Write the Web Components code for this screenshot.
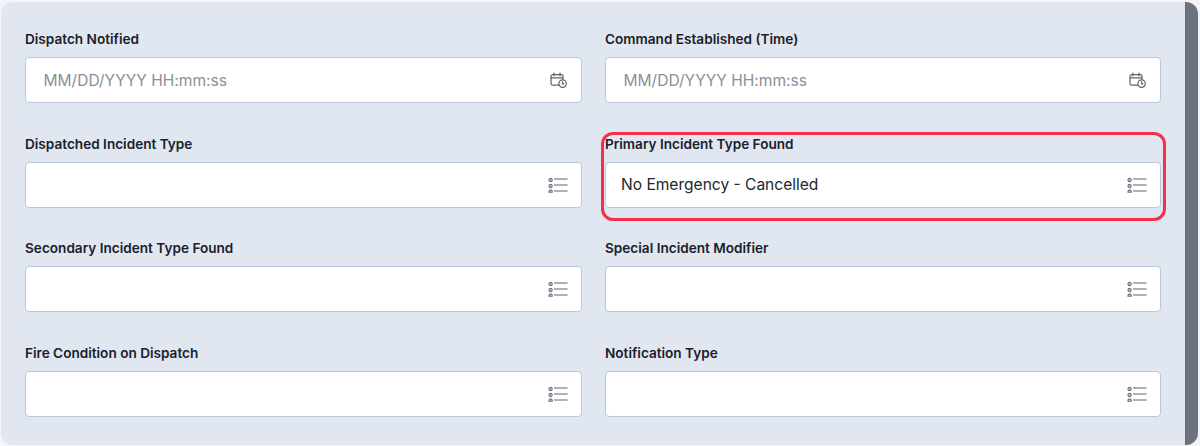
<!DOCTYPE html>
<html><head><meta charset="utf-8"><style>
html,body{margin:0;padding:0;height:446px;overflow:hidden;background:#f3f3f8}
</style></head><body>
<template id="field-t"><style>
:host{display:flex;flex-direction:column;gap:10px;font-family:Inter,"Liberation Sans",sans-serif;min-width:0}
.l{font-size:13.6px;font-weight:600;line-height:16px;color:#1a202c;height:16px;white-space:nowrap}
.b{box-sizing:border-box;height:46px;background:#fff;border:1px solid #b9c6dc;border-radius:4px;display:flex;align-items:center;padding:0 13px 0 var(--pad,15px)}
.v{flex:1;font-size:15.55px;color:#22262e;white-space:nowrap}
:host([placeholder]) .v{color:#8b8f96}
svg{display:block;flex:none}
</style><div class="l"></div><div class="b"><div class="v"></div><span id="i"></span></div></template>
<script>
const ICONS={
cal:'<svg width="18" height="16" viewBox="0 0 18 16" fill="none" stroke="#5b6270" stroke-width="1.2" stroke-linecap="round"><path d="M9 13.2H2.6A1.6 1.6 0 0 1 1 11.6V4.2A1.6 1.6 0 0 1 2.6 2.6h8.8A1.6 1.6 0 0 1 13 4.2V7.2"/><path d="M1 5.8h12M4 1.2v2.6M10 1.2v2.6"/><circle cx="12.6" cy="11.6" r="3.7"/><path d="M12.6 9.8v2h1.3"/></svg>',
list:'<svg width="20" height="16" viewBox="0 0 20 16" fill="#b4b9c3" stroke="#5f6673"><rect x="1" y="1.4" width="3.2" height="3.2" rx="1" stroke-width="1"/><rect x="1" y="7.4" width="3.2" height="3.2" rx="1" stroke-width="1"/><rect x="1" y="13.4" width="3.2" height="3.2" rx="1" stroke-width="1" transform="translate(0 -.4)"/><path d="M6 2.5h13.6M6 8.5h13.6M6 14.5h13.6" stroke-width="1.2" transform="translate(0 -.5)"/></svg>'};
class FormField extends HTMLElement{
constructor(){super();const r=this.attachShadow({mode:'open'});r.appendChild(document.getElementById('field-t').content.cloneNode(true));}
connectedCallback(){const r=this.shadowRoot;r.querySelector('.l').textContent=this.getAttribute('label');
r.querySelector('.v').textContent=this.getAttribute('placeholder')||this.getAttribute('value')||'';
r.querySelector('#i').innerHTML=ICONS[this.getAttribute('icon')];r.querySelector('#i').style.display='block';
if(this.hasAttribute('placeholder'))r.querySelector('.b').style.setProperty('--pad','17.5px');}}
class FormPanel extends HTMLElement{
constructor(){super();this.attachShadow({mode:'open'}).innerHTML=`<style>
:host{display:flex;box-sizing:border-box;margin:2px 2px 1px 1px;height:443px;background:#e1e7f0;border-radius:12px;overflow:hidden;position:relative}
.g{flex:1;box-sizing:border-box;padding:29px 24px 0 24px;display:grid;grid-template-columns:557px 556px;column-gap:23px;grid-auto-rows:72px;row-gap:32.67px}
.s{width:13px;flex:none;background:#6b7280;border-left:1px solid #646b78;box-sizing:border-box}
</style><div class="g"><slot></slot></div><div class="s"></div>`;}}
class Highlight extends HTMLElement{
constructor(){super();this.attachShadow({mode:'open'}).innerHTML=`<style>
:host{display:block;position:absolute;left:601px;top:132px;width:565px;height:89px;box-sizing:border-box;border:3px solid #f4304a;border-radius:12px;pointer-events:none}
</style>`;}}
customElements.define('form-field',FormField);
customElements.define('form-panel',FormPanel);
customElements.define('form-highlight',Highlight);
</script>
<form-panel>
<form-field label="Dispatch Notified" placeholder="MM/DD/YYYY HH:mm:ss" icon="cal"></form-field>
<form-field label="Command Established (Time)" placeholder="MM/DD/YYYY HH:mm:ss" icon="cal"></form-field>
<form-field label="Dispatched Incident Type" icon="list"></form-field>
<form-field label="Primary Incident Type Found" value="No Emergency - Cancelled" icon="list"></form-field>
<form-field label="Secondary Incident Type Found" icon="list"></form-field>
<form-field label="Special Incident Modifier" icon="list"></form-field>
<form-field label="Fire Condition on Dispatch" icon="list"></form-field>
<form-field label="Notification Type" icon="list"></form-field>
</form-panel>
<form-highlight></form-highlight>
</body></html>
